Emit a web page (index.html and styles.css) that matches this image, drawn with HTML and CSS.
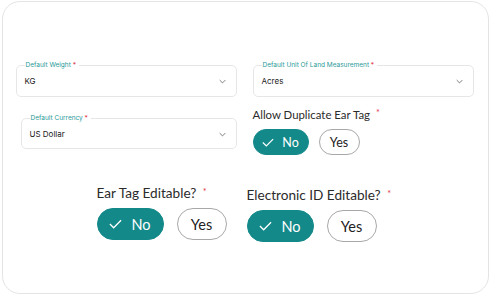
FILE: index.html
```html
<!DOCTYPE html>
<html lang="en">
<head>
<meta charset="UTF-8">
<title>Settings</title>
<link rel="stylesheet" href="styles.css">
</head>
<body>
<div class="card">

    <div class="row-top">
        <fieldset class="field">
            <legend>Default Weight <span class="req">*</span></legend>
            <div class="value">KG
                <svg class="chev" viewBox="0 0 10 6"><path d="M1 1l4 4 4-4"/></svg>
            </div>
        </fieldset>
        <fieldset class="field">
            <legend>Default Unit Of Land Measurement <span class="req">*</span></legend>
            <div class="value">Acres
                <svg class="chev" viewBox="0 0 10 6"><path d="M1 1l4 4 4-4"/></svg>
            </div>
        </fieldset>
    </div>

    <div class="row-mid">
        <fieldset class="field currency">
            <legend>Default Currency <span class="req">*</span></legend>
            <div class="value">US Dollar
                <svg class="chev" viewBox="0 0 10 6"><path d="M1 1l4 4 4-4"/></svg>
            </div>
        </fieldset>
        <div class="toggle-group small">
            <div class="question">Allow Duplicate Ear Tag <span class="req">*</span></div>
            <div class="choices">
                <button class="choice on"><svg viewBox="0 0 14 10"><path d="M1 5l4 4 8-8"/></svg>No</button>
                <button class="choice">Yes</button>
            </div>
        </div>
    </div>

    <div class="row-bottom">
        <div class="toggle-group">
            <div class="question">Ear Tag Editable? <span class="req">*</span></div>
            <div class="choices">
                <button class="choice on"><svg viewBox="0 0 14 10"><path d="M1 5l4 4 8-8"/></svg>No</button>
                <button class="choice">Yes</button>
            </div>
        </div>
        <div class="toggle-group shifted">
            <div class="question">Electronic ID Editable? <span class="req">*</span></div>
            <div class="choices">
                <button class="choice on"><svg viewBox="0 0 14 10"><path d="M1 5l4 4 8-8"/></svg>No</button>
                <button class="choice">Yes</button>
            </div>
        </div>
    </div>

</div>
</body>
</html>
```

FILE: styles.css
```css
body {
    margin: 0;
    background: #fff;
    font-family: Inter, "Noto Sans", sans-serif;
    color: #2b2b2b;
}
.card {
    box-sizing: border-box;
    width: 487px;
    height: 293px;
    margin: 1px 0 0 2px;
    border: 1.5px solid #e4e4e4;
    border-radius: 18px;
    padding: 59px 12px 0 12.5px;
}

/* select fields */
.row-top {
    display: grid;
    grid-template-columns: 221px 221px;
    column-gap: 16px;
}
.field {
    margin: 0;
    padding: 0 10px 0 8px;
    border: 1px solid #e6e6e6;
    border-radius: 5px;
    height: 36px;
    box-sizing: border-box;
}
.field legend {
    font-size: 6.5px;
    color: #2a9a98;
    padding: 0 3px 0 1px;
    margin-left: 0;
    line-height: 9px;
}
.req {
    color: #e0344a;
}
.value {
    display: flex;
    align-items: center;
    justify-content: space-between;
    font-size: 8px;
    color: #222;
    height: 26px;
    margin-top: -2px;
}
.chev {
    width: 7px;
    height: 5px;
    fill: none;
    stroke: #555;
    stroke-width: 1.1;
}

.row-mid {
    display: grid;
    grid-template-columns: 216px 221px;
    column-gap: 16px;
    margin-top: 9px;
    padding-left: 5px;
}
.currency {
    margin-top: 8px;
    height: 35px;
}

/* yes / no toggles */
.toggle-group .question {
    font-family: Lato, Inter, sans-serif;
    font-size: 13.6px;
    line-height: 16px;
    color: #2b2b2b;
}
.toggle-group .question .req {
    font-size: 9px;
    vertical-align: 3px;
    margin-left: 3px;
}
.choices {
    display: flex;
    gap: 13px;
    margin-top: 7px;
}
.choice {
    font-family: Lato, Inter, sans-serif;
    display: flex;
    align-items: center;
    justify-content: center;
    gap: 9px;
    height: 32px;
    width: 50px;
    border: 1px solid #a8a8a8;
    border-radius: 16px;
    background: #fff;
    color: #222;
    font-size: 14.5px;
    padding: 0;
}
.choice.on {
    width: 67px;
    border-color: #13898a;
    background: #13898a;
    color: #fff;
}
.choice svg {
    width: 13px;
    height: 10px;
    fill: none;
    stroke: #fff;
    stroke-width: 1.4;
}

.toggle-group.small .question {
    font-size: 11.4px;
    line-height: 14px;
}
.toggle-group.small .choices {
    margin-top: 7px;
    gap: 10px;
}
.toggle-group.small .choice {
    height: 26px;
    width: 41px;
    font-size: 12.5px;
    border-radius: 13px;
}
.toggle-group.small .choice.on {
    width: 56px;
    gap: 8px;
}
.toggle-group.small .choice svg {
    width: 12px;
    height: 9px;
}

.row-bottom {
    display: flex;
    gap: 20px;
    padding-left: 81px;
    margin-top: 29px;
}
.toggle-group.shifted {
    margin-top: 2px;
}
```
